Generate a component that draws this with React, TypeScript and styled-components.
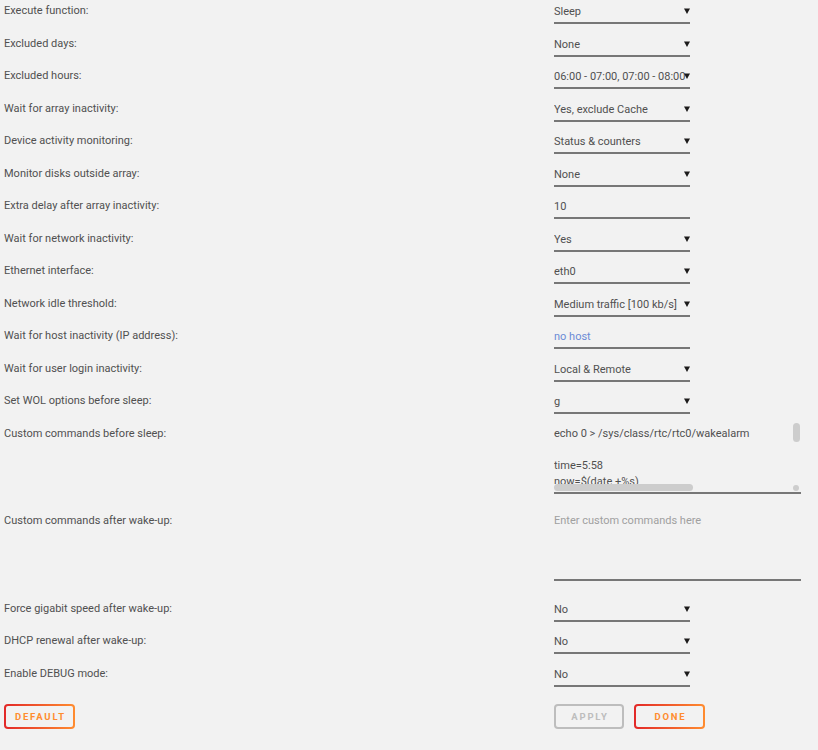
import React from 'react';
import styled, { createGlobalStyle } from 'styled-components';

const GlobalStyle = createGlobalStyle`
  html, body {
    margin: 0;
    padding: 0;
    background: #f2f2f2;
  }
  body {
    font-family: Roboto, 'Liberation Sans', sans-serif;
    font-size: 11px;
    color: #505050;
  }
`;

const Page = styled.div`
  padding: 0 4px;
  width: 810px;
`;

const Row = styled.div<{ $tall?: boolean }>`
  display: grid;
  grid-template-columns: 550px 247px;
  align-items: start;
  height: ${({ $tall }) => ($tall ? '87.5px' : '32.5px')};
`;

const Label = styled.div`
  line-height: 16px;
  padding-top: 3px;
  white-space: nowrap;
`;

const SelectBox = styled.div`
  position: relative;
  width: 136px;
  height: 22px;
  box-sizing: content-box;
  border-bottom: 2px solid #777;
`;

const SelectText = styled.div`
  line-height: 16px;
  padding-top: 4px;
  white-space: nowrap;
  overflow: hidden;
  width: 136px;
`;

const Caret = styled.svg`
  position: absolute;
  right: 0;
  top: 8px;
  width: 6px;
  height: 6px;
`;

const TextInput = styled.div<{ $link?: boolean }>`
  width: 136px;
  height: 24px;
  line-height: 16px;
  padding-top: 4px;
  box-sizing: border-box;
  border-bottom: 2px solid #777;
  color: ${({ $link }) => ($link ? '#6b8bd6' : 'inherit')};
`;

const Commands = styled.textarea<{ $h: number }>`
  display: block;
  width: 100%;
  height: ${({ $h }) => $h}px;
  box-sizing: border-box;
  margin: 0;
  padding: 3px 0 0 0;
  border: none;
  background: transparent;
  font-family: inherit;
  font-size: 11px;
  line-height: 16px;
  color: #505050;
  white-space: pre;
  overflow: hidden;
  resize: none;
  outline: none;

  &::placeholder {
    color: #a0a0a0;
  }
`;

const Editor = styled.div`
  width: 247px;
  border-bottom: 2px solid #777;
`;

const EditorBody = styled.div`
  display: flex;
`;

const VTrack = styled.div`
  width: 7px;
  flex-shrink: 0;
  margin-right: 1px;
`;

const VThumb = styled.div`
  width: 7px;
  height: 19px;
  border-radius: 4px;
  background: #cdcdcd;
`;

const HTrack = styled.div`
  height: 8px;
  display: flex;
  align-items: center;
  justify-content: space-between;
`;

const HThumb = styled.div`
  width: 139px;
  height: 7px;
  border-radius: 4px;
  background: #cdcdcd;
`;

const CornerDot = styled.div`
  width: 6px;
  height: 6px;
  margin-right: 2px;
  border-radius: 50%;
  background: #cdcdcd;
`;

const Buttons = styled.div`
  display: grid;
  grid-template-columns: 550px auto;
  padding-top: 8.5px;
`;

const ButtonGroup = styled.div`
  display: flex;
  gap: 10px;
`;

const Button = styled.button<{ $disabled?: boolean; $w?: number }>`
  height: 25px;
  width: ${({ $w }) => $w ?? 71}px;
  box-sizing: border-box;
  border: 2px solid transparent;
  border-radius: 4px;
  background: ${({ $disabled }) =>
    $disabled
      ? 'linear-gradient(#f2f2f2, #f2f2f2) padding-box, linear-gradient(90deg, #bdbdbd, #bdbdbd) border-box'
      : 'linear-gradient(#f2f2f2, #f2f2f2) padding-box, linear-gradient(90deg, #e22828, #ff8c2f) border-box'};
  color: ${({ $disabled }) => ($disabled ? '#bdbdbd' : '#ff8c2f')};
  font-family: Roboto, 'Liberation Sans', sans-serif;
  font-weight: 700;
  font-size: 9.5px;
  letter-spacing: 1.8px;
  text-transform: uppercase;
  padding: 0 0 0 2px;
  cursor: pointer;
`;

type Field =
  | { label: string; kind: 'select'; value: string }
  | { label: string; kind: 'input'; value: string; link?: boolean }
  | { label: string; kind: 'script'; value: string }
  | { label: string; kind: 'text'; placeholder: string };

const sleepScript = [
  'echo 0 > /sys/class/rtc/rtc0/wakealarm',
  '',
  'time=5:58',
  'now=$(date +%s)',
  'otime=$(date --date="$time" +%s)',
  'if [ $now -ge $otime ]; then',
  '  otime=$(date --date="tomorrow $time" +%s)',
  'fi',
  'echo $otime > /sys/class/rtc/rtc0/wakealarm',
  'logger "s3_sleep: wake alarm set for $(date --date=@$otime)"',
].join('\n');

const fields: Field[] = [
  { label: 'Execute function:', kind: 'select', value: 'Sleep' },
  { label: 'Excluded days:', kind: 'select', value: 'None' },
  { label: 'Excluded hours:', kind: 'select', value: '06:00 - 07:00, 07:00 - 08:00' },
  { label: 'Wait for array inactivity:', kind: 'select', value: 'Yes, exclude Cache' },
  { label: 'Device activity monitoring:', kind: 'select', value: 'Status & counters' },
  { label: 'Monitor disks outside array:', kind: 'select', value: 'None' },
  { label: 'Extra delay after array inactivity:', kind: 'input', value: '10' },
  { label: 'Wait for network inactivity:', kind: 'select', value: 'Yes' },
  { label: 'Ethernet interface:', kind: 'select', value: 'eth0' },
  { label: 'Network idle threshold:', kind: 'select', value: 'Medium traffic [100 kb/s]' },
  { label: 'Wait for host inactivity (IP address):', kind: 'input', value: 'no host', link: true },
  { label: 'Wait for user login inactivity:', kind: 'select', value: 'Local & Remote' },
  { label: 'Set WOL options before sleep:', kind: 'select', value: 'g' },
  { label: 'Custom commands before sleep:', kind: 'script', value: sleepScript },
  { label: 'Custom commands after wake-up:', kind: 'text', placeholder: 'Enter custom commands here' },
  { label: 'Force gigabit speed after wake-up:', kind: 'select', value: 'No' },
  { label: 'DHCP renewal after wake-up:', kind: 'select', value: 'No' },
  { label: 'Enable DEBUG mode:', kind: 'select', value: 'No' },
];

const Select: React.FC<{ value: string }> = ({ value }) => (
  <SelectBox>
    <SelectText>{value}</SelectText>
    <Caret viewBox="0 0 6 6">
      <path d="M0 0.5 H6 L3 6 Z" fill="#1c1b1b" />
    </Caret>
  </SelectBox>
);

// textarea with the scrolled-state bars drawn next to it
const ScriptEditor: React.FC<{ value: string }> = ({ value }) => (
  <Editor>
    <EditorBody>
      <Commands $h={61} defaultValue={value} spellCheck={false} />
      <VTrack>
        <VThumb />
      </VTrack>
    </EditorBody>
    <HTrack>
      <HThumb />
      <CornerDot />
    </HTrack>
  </Editor>
);

export default function App() {
  return (
    <Page>
      <GlobalStyle />
      {fields.map((f) => (
        <Row key={f.label} $tall={f.kind === 'script' || f.kind === 'text'}>
          <Label>{f.label}</Label>
          {f.kind === 'select' && <Select value={f.value} />}
          {f.kind === 'input' && <TextInput $link={f.link}>{f.value}</TextInput>}
          {f.kind === 'script' && <ScriptEditor value={f.value} />}
          {f.kind === 'text' && (
            <Editor>
              <Commands $h={69} placeholder={f.placeholder} spellCheck={false} />
            </Editor>
          )}
        </Row>
      ))}
      <Buttons>
        <div>
          <Button>Default</Button>
        </div>
        <ButtonGroup>
          <Button $disabled $w={70}>Apply</Button>
          <Button>Done</Button>
        </ButtonGroup>
      </Buttons>
    </Page>
  );
}
